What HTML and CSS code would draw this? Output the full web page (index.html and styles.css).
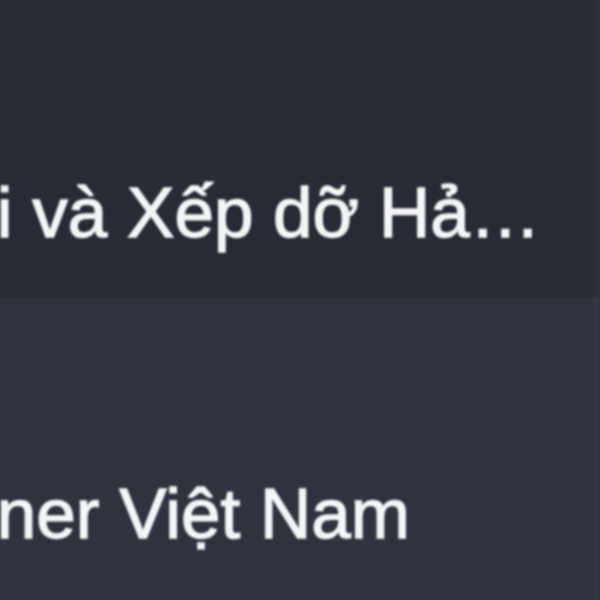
FILE: index.html
```html
<!DOCTYPE html>
<html lang="vi">
<head>
  <meta charset="UTF-8" />
  <meta name="viewport" content="width=device-width, initial-scale=1.0"/>
  <title>Danh sách doanh nghiệp</title>
  <link rel="stylesheet" href="styles.css">
</head>
<body>
<div class="list">
  <div class="item">
    <span class="name">Công ty Cổ phần Vận tải và Xếp dỡ Hải An</span>
  </div>
  <div class="item item-alt">
    <span class="name">Công ty Cổ phần Container Việt Nam</span>
  </div>
</div>
</body>
</html>
```

FILE: styles.css
```css
* { box-sizing: border-box; }
html, body {
  margin: 0;
  height: 100%;
  overflow: hidden;
  background: #2f333e;
}
body {
  font-family: 'Liberation Sans', Arial, sans-serif;
  color: #f4f5f7;
}
.list {
  margin: -3px 0 0 -761px;
  width: 1361px;
  filter: blur(0.8px);
}
.item {
  height: 301px;
  padding: 176px 46px 0 0;
  background: #272b34;
  border-right: 7px solid #2c3039;
}
.item-alt {
  background: #2f333e;
  border-right-color: #343844;
}
.name {
  display: block;
  font-size: 71px;
  line-height: 80px;
  white-space: nowrap;
  overflow: hidden;
  text-overflow: ellipsis;
  -webkit-text-stroke: 1.4px #f4f5f7;
}
```
